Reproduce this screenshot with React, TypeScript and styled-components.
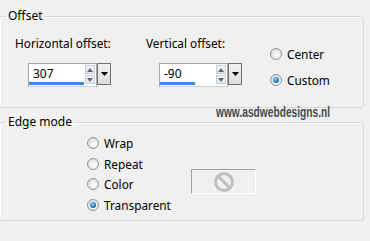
import React from 'react';
import styled, { createGlobalStyle } from 'styled-components';

const GlobalStyle = createGlobalStyle`
  body {
    margin: 0;
    background: #f0f0f0;
    font-family: 'Noto Sans', 'Open Sans', sans-serif;
    font-size: 11.5px;
    color: #000;
  }
`;

const Page = styled.div`
  position: relative;
  width: 370px;
  height: 241px;
  padding-top: 8px;
  box-sizing: border-box;
  overflow: hidden;
  background: #f0f0f0;
`;

const Group = styled.fieldset<{ $gap?: number }>`
  margin: ${(p) => p.$gap || 0}px 0 0 -1px;
  width: 365px;
  box-sizing: border-box;
  border: 1px solid #d9d9d9;
  border-radius: 3px;
  padding: 0;
  min-width: 0;
  box-shadow: inset 1px 1px 0 #fff;
`;

const Legend = styled.legend`
  margin-left: 6px;
  padding: 0 2px;
  font-size: 12px;
  line-height: 16px;
`;

const OffsetRow = styled.div`
  display: flex;
  padding: 11px 0 0 15px;
  box-sizing: border-box;
  height: 83px;
`;

const FieldColumn = styled.div<{ $width: number }>`
  width: ${(p) => p.$width}px;
  display: flex;
  flex-direction: column;
`;

const FieldLabel = styled.div`
  line-height: 16px;
  font-size: 11.8px;
`;

const SpinBox = styled.div`
  display: flex;
  margin: 12px 0 0 13px;
`;

const Field = styled.div`
  position: relative;
  width: 69px;
  height: 24px;
  box-sizing: border-box;
  background: #fff;
  border: 1px solid #a9a9a9;
  border-bottom-color: #cfcfcf;
  display: flex;
  align-items: flex-start;
`;

const FieldValue = styled.span`
  flex: 1;
  padding: 2px 0 0 4px;
  line-height: 16px;
  font-size: 12px;
`;

const Progress = styled.div`
  position: absolute;
  left: 0;
  bottom: 1px;
  height: 3px;
  background: #3d8ee0;
`;

const Arrows = styled.div`
  display: flex;
  flex-direction: column;
  gap: 1px;
  padding: 1px 0 0 0;
  margin-right: 1px;
`;

const ArrowButton = styled.div`
  width: 10px;
  height: 9px;
  box-sizing: border-box;
  border: 1px solid #c9ced6;
  background: linear-gradient(#f6f7f9, #e6e9ee);
  display: flex;
  align-items: center;
  justify-content: center;
`;

const DropButton = styled.div`
  width: 14px;
  height: 22px;
  box-sizing: border-box;
  border: 1px solid #6f6f6f;
  background: linear-gradient(#f2f2f2, #dcdcdc);
  display: flex;
  align-items: center;
  justify-content: center;
`;

const RadioColumn = styled.div`
  display: flex;
  flex-direction: column;
  gap: 10px;
  padding-top: 11px;
`;

const RadioList = styled.div`
  display: flex;
  flex-direction: column;
  gap: 4.7px;
  width: 104px;
  padding: 5px 0 0 87px;
`;

const RadioRow = styled.div`
  display: flex;
  align-items: center;
  gap: 5px;
  line-height: 16px;
  font-size: 11.8px;
`;

const RadioCircle = styled.span<{ $checked?: boolean }>`
  position: relative;
  width: 12px;
  height: 12px;
  box-sizing: border-box;
  border-radius: 50%;
  border: 1px solid #8e9398;
  background: radial-gradient(circle at 60% 65%, #ffffff 0%, #e9e9e9 55%, #cfcfcf 100%);
  display: flex;
  align-items: center;
  justify-content: center;
  &::after {
    content: '';
    display: ${(p) => (p.$checked ? 'block' : 'none')};
    width: 6px;
    height: 6px;
    border-radius: 50%;
    background: radial-gradient(circle at 40% 35%, #8fd3ff 0%, #2a86c8 50%, #0d3d66 100%);
  }
`;

const EdgeBody = styled.div`
  display: flex;
  height: 90px;
`;

const Swatch = styled.div`
  margin-top: 39px;
  width: 65px;
  height: 25px;
  box-sizing: border-box;
  border: 1px solid #fff;
  border-top-color: #a0a0a0;
  border-left-color: #a0a0a0;
  display: flex;
  align-items: center;
  justify-content: center;
`;

const Watermark = styled.div`
  position: absolute;
  left: 216px;
  top: 103px;
  font-family: 'Liberation Sans', 'DejaVu Sans', sans-serif;
  font-size: 15px;
  font-weight: bold;
  line-height: 18px;
  color: #4a4a4a;
  transform: scaleX(0.68);
  transform-origin: left center;
  white-space: nowrap;
`;

const Up = () => (
  <svg width="6" height="4" viewBox="0 0 6 4"><path d="M0 4 L3 0 L6 4 Z" fill="#56688c" /></svg>
);
const Down = () => (
  <svg width="6" height="4" viewBox="0 0 6 4"><path d="M0 0 L3 4 L6 0 Z" fill="#56688c" /></svg>
);

function Spinner({ value, fill }: { value: string; fill: number }) {
  return (
    <SpinBox>
      <Field>
        <FieldValue>{value}</FieldValue>
        <Arrows>
          <ArrowButton><Up /></ArrowButton>
          <ArrowButton><Down /></ArrowButton>
        </Arrows>
        <Progress style={{ width: fill }} />
      </Field>
      <DropButton>
        <svg width="7" height="4" viewBox="0 0 7 4"><path d="M0 0 L7 0 L3.5 4 Z" fill="#000" /></svg>
      </DropButton>
    </SpinBox>
  );
}

function Radio({ label, checked }: { label: string; checked?: boolean }) {
  return (
    <RadioRow>
      <RadioCircle $checked={checked} />
      <span>{label}</span>
    </RadioRow>
  );
}

export default function App() {
  return (
    <Page>
      <GlobalStyle />
      <Group>
        <Legend>Offset</Legend>
        <OffsetRow>
          <FieldColumn $width={131}>
            <FieldLabel>Horizontal offset:</FieldLabel>
            <Spinner value="307" fill={55} />
          </FieldColumn>
          <FieldColumn $width={124}>
            <FieldLabel>Vertical offset:</FieldLabel>
            <Spinner value="-90" fill={35} />
          </FieldColumn>
          <RadioColumn>
            <Radio label="Center" />
            <Radio label="Custom" checked />
          </RadioColumn>
        </OffsetRow>
      </Group>
      <Group $gap={6}>
        <Legend>Edge mode</Legend>
        <EdgeBody>
          <RadioList>
            <Radio label="Wrap" />
            <Radio label="Repeat" />
            <Radio label="Color" />
            <Radio label="Transparent" checked />
          </RadioList>
          <Swatch>
            <svg width="22" height="22" viewBox="0 0 22 22">
              <circle cx="11" cy="11" r="8.5" fill="none" stroke="#bdbdbd" strokeWidth="3" />
              <line x1="5" y1="5" x2="17" y2="17" stroke="#bdbdbd" strokeWidth="3" />
            </svg>
          </Swatch>
        </EdgeBody>
      </Group>
      <Watermark>www.asdwebdesigns.nl</Watermark>
    </Page>
  );
}
